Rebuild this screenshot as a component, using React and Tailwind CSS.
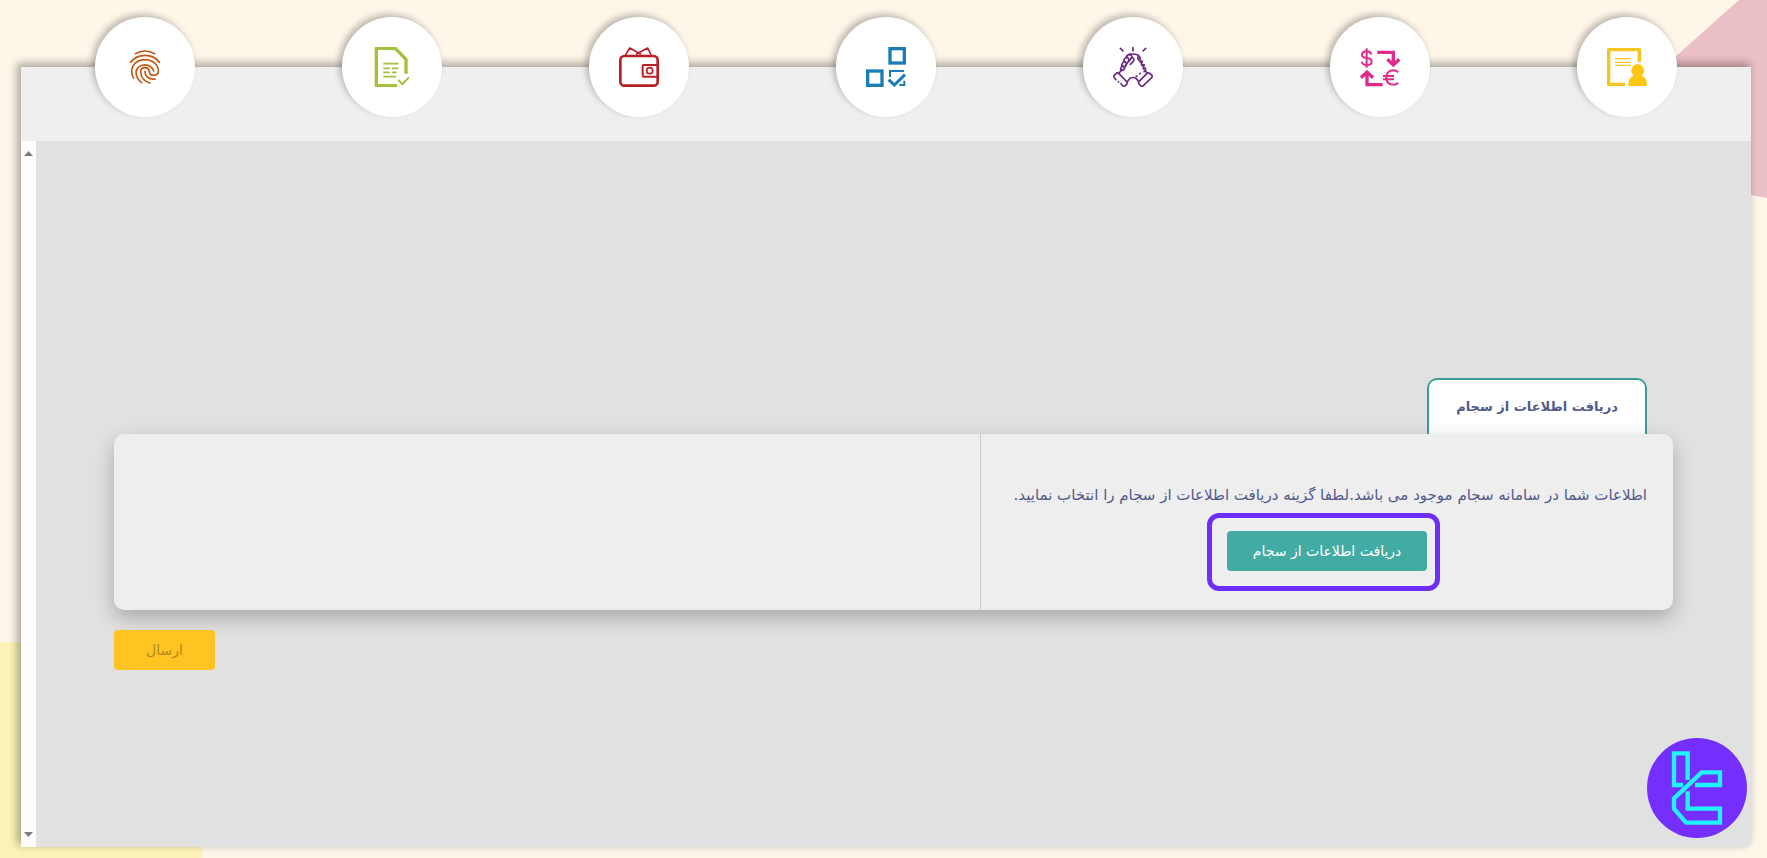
const FingerprintIcon = () => (
  <svg viewBox="0 0 120 120" className="size-10" fill="none" stroke="#c4560f" strokeWidth="5" strokeLinecap="round">
    <path d="M31 20Q60 4 89 20" />
    <path d="M17 46Q32 25 60 25Q88 25 103 46" />
    <path d="M26 93Q20 84 20 72A40 34 0 0 1 100 72C100 89 74 89 73 73C71 58 47 58 47 74C47 92 60 104 75 108" />
    <path d="M50 107Q33 94 33 74A27 24 0 0 1 86 72" />
    <path d="M60 73C60 90 72 98 91 96" />
  </svg>
);

const DocIcon = () => (
  <svg viewBox="0 0 120 120" className="size-10" fill="none" stroke="#a3c13d">
    <path d="M75 116H13V4H70L102 37V80" strokeWidth="10" strokeLinejoin="round" />
    <path d="M34 50H79M34 64H54M60 64H79M34 76H54M60 76H74M34 89H72" strokeWidth="5" />
    <path d="M79 99L91 111L111 91" strokeWidth="6" />
  </svg>
);

const WalletIcon = () => (
  <svg viewBox="0 0 120 120" className="size-10" fill="none" stroke="#ba1f25">
    <rect x="4" y="27" width="112" height="89" rx="12" strokeWidth="8" />
    <path d="M116 54H74Q71 54 71 57V86Q71 89 74 89H116" strokeWidth="6" />
    <circle cx="92" cy="71" r="9" strokeWidth="5" />
    <path d="M19 25L32 3L66 22M51 22L86 3L97 25" strokeWidth="5" strokeLinejoin="round" />
  </svg>
);

const BlocksIcon = () => (
  <svg viewBox="0 0 120 120" className="size-10" fill="none" stroke="#1b7db8">
    <rect x="72" y="5" width="43" height="43" strokeWidth="10" />
    <rect x="5" y="72" width="43" height="43" strokeWidth="10" />
    <path d="M72 90V72H114M115 101V114H100" strokeWidth="6" />
    <path d="M68 98L85 114L117 83" strokeWidth="9" />
  </svg>
);

const HandsIcon = () => (
  <svg
    viewBox="0 0 120 120"
    className="size-10"
    fill="none"
    stroke="#6b2b83"
    strokeWidth="5"
    strokeLinecap="round"
    strokeLinejoin="round"
  >
    <path d="M22 4L30 12M60 2V12M98 4L90 12" />
    {/* sleeves */}
    <path d="M12 78L4 84Q1 88 4 92L9 98M24 110L29 116Q33 120 37 116L41 112Q44 108 41 104L18 80Q15 76 12 78" />
    <path d="M16 104L17 105" />
    <path d="M108 78L116 84Q119 88 116 92L91 116Q87 120 83 116L78 111Q75 107 78 104L102 79Q105 76 108 78" />
    {/* arms */}
    <path d="M18 78L27 68M43 104L51 94Q60 89 69 94L77 103M102 78L96 70M80 80L82 79M70 88L72 87" />
    {/* fingers */}
    <path d="M27 70Q20 68 24 62L30 56Q36 59 34 65Q31 71 27 70" />
    <path d="M27 58Q24 53 29 48L34 43Q41 46 40 53L34 62" />
    <path d="M33 45Q31 39 36 34L41 30Q50 35 47 42L39 53" />
    <path d="M40 31Q41 24 50 22Q60 27 54 35L47 43" />
    <path d="M50 22Q63 19 76 25L82 33M58 31Q66 38 61 43L52 52" />
    <path d="M76 26Q73 35 77 39M82 34Q78 40 82 46Q86 40 88 43Q83 50 87 56Q91 50 94 54Q90 60 91 66Q96 61 98 65Q99 70 93 74" />
  </svg>
);

const ExchangeIcon = () => (
  <svg viewBox="0 0 120 120" className="size-10" fill="none" stroke="#e22a8b">
    <path d="M52 16H100V51M3 92L21 75L39 92M21 77V113H68M82 37L100 54L118 37" strokeWidth="10" />
    <path
      d="M34 22Q31 13 20 13Q6 13 6 24Q6 32 20 33Q35 34 35 44Q35 54 20 54Q7 54 5 44M20 4V62"
      strokeWidth="6"
    />
    <path d="M115 76Q108 70 100 70Q79 72 79 92Q79 112 100 113Q108 113 115 108M69 87H102M69 97H102" strokeWidth="6" />
  </svg>
);

const ProfileIcon = () => (
  <svg viewBox="0 0 120 120" className="size-10" fill="none" stroke="#f7c520">
    <path d="M54 112H5V8H97V45" strokeWidth="10" strokeLinejoin="round" />
    <path d="M24 35H71M24 46H71M24 55H71" strokeWidth="4" />
    <path
      d="M92 51A20 20 0 0 1 104 86Q120 92 120 112Q120 117 115 117H69Q64 117 64 112Q64 92 80 86A20 20 0 0 1 92 51Z"
      fill="#fcc70d"
      stroke="none"
    />
  </svg>
);

// first item sits on the right, the page is rtl
const steps = [
  { label: "اطلاعات فردی", icon: <ProfileIcon /> },
  { label: "اطلاعات مالی", icon: <ExchangeIcon /> },
  { label: "توافق نامه", icon: <HandsIcon /> },
  { label: "پرسشنامه", icon: <BlocksIcon /> },
  { label: "کیف پول", icon: <WalletIcon /> },
  { label: "قرارداد", icon: <DocIcon /> },
  { label: "احراز هویت", icon: <FingerprintIcon /> },
];

const Backdrop = () => (
  <div className="absolute inset-0 -z-10 overflow-hidden bg-[#fef6e9]">
    <svg viewBox="0 0 120 200" className="absolute top-0 right-0 h-50 w-30" fill="#eabfc6">
      <path d="M92 0H120V198L0 176V82Z" />
    </svg>
    <div className="absolute bottom-0 left-0 h-54 w-[202px] bg-[#fdf3b8]" />
  </div>
);

const ScrollRail = () => (
  <div className="flex w-[15px] flex-col items-center justify-between bg-[#fdfdfd] py-2.5">
    <svg viewBox="0 0 9 5" className="h-[5px] w-[9px]" fill="#7b7b7b">
      <path d="M0 5L4.5 0L9 5Z" />
    </svg>
    <svg viewBox="0 0 9 5" className="h-[5px] w-[9px]" fill="#7b7b7b">
      <path d="M0 0L4.5 5L9 0Z" />
    </svg>
  </div>
);

const BrandBadge = () => (
  <div className="absolute right-5 bottom-5 size-25 rounded-full bg-[#752ffc]">
    <svg viewBox="0 0 300 300" className="size-25" fill="none" stroke="#1ff4ff" strokeWidth="13">
      <path d="M108 141H81V46H122V126" />
      <path d="M144 141H219V103H164L81 181V212L117 254H219V212H122V160" />
    </svg>
  </div>
);

export default function App() {
  return (
    <div
      dir="rtl"
      className="relative isolate flex min-h-screen flex-col pt-[67px] pr-4 pb-[11px] pl-[21px] font-['DejaVu_Sans',sans-serif]"
    >
      <Backdrop />
      <div className="flex flex-1 flex-col rounded-br-md bg-[#e1e1e1] shadow-[-3px_-3px_8px_1px_rgba(0,0,0,0.32)]">
        <nav className="grid h-[74px] grid-cols-7 justify-items-center bg-[#efefef]">
          {steps.map((step) => (
            <button
              key={step.label}
              type="button"
              aria-label={step.label}
              className="-mt-[50px] flex size-25 items-center justify-center rounded-full bg-white shadow-[-3px_-3px_6px_rgba(0,0,0,0.25)]"
            >
              {step.icon}
            </button>
          ))}
        </nav>
        <div className="flex flex-1">
          <main className="flex flex-1 flex-col justify-center px-[78px] pt-[60px]">
            <div className="mr-[26px] flex h-14 w-55 items-center justify-center self-start rounded-t-[10px] border-2 border-b-0 border-[#3d9d95] bg-white">
              <h1 className="text-[13px] font-bold whitespace-nowrap text-[#505a8c]">دریافت اطلاعات از سجام</h1>
            </div>
            <section className="flex h-44 rounded-[10px] bg-[#eeeeee] shadow-[0_8px_20px_rgba(0,0,0,0.25)]">
              <div className="flex w-4/9 flex-col items-center gap-6 border-l border-[#c9c9c9] px-[26px] pt-[49px]">
                <p className="self-stretch text-[15px] leading-6 whitespace-nowrap text-[#505a8c]">
                  اطلاعات شما در سامانه سجام موجود می باشد.لطفا گزینه دریافت اطلاعات از سجام را انتخاب نمایید.
                </p>
                <div className="relative">
                  <button type="button" className="h-10 w-50 rounded-sm bg-[#42aba3] text-sm text-white">
                    دریافت اطلاعات از سجام
                  </button>
                  <div className="pointer-events-none absolute -top-[18px] -right-[13px] -bottom-5 -left-5 rounded-xl border-5 border-[#6f2ef8]" />
                </div>
              </div>
            </section>
            <button
              type="button"
              disabled
              className="mt-5 h-10 w-[101px] self-end rounded-sm bg-[#ffc322] text-sm text-[#b08a20]"
            >
              ارسال
            </button>
          </main>
          <ScrollRail />
        </div>
      </div>
      <BrandBadge />
    </div>
  );
}
